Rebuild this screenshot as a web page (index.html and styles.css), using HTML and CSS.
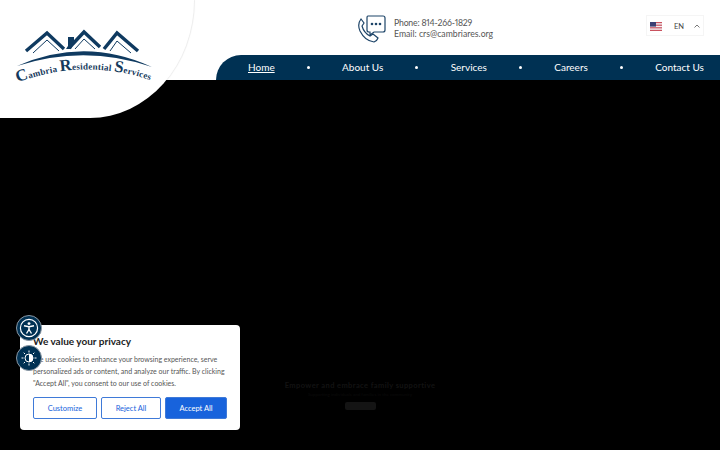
FILE: index.html
```html
<!DOCTYPE html>
<html>
<head>
    <title>Cambria Residential Services</title>
    <link rel="stylesheet" href="styles.css">
</head>
<body>
    <div class="logo-blob">
        <svg class="logo" width="194" height="118" viewBox="0 0 194 118">
            <g fill="none" stroke="#0f3a60" stroke-linejoin="miter">
                <path stroke-width="3.4" d="M26 51 L47 33 L64 49"/>
                <path stroke-width="1" d="M33 53 L47 40 L59 51"/>
                <path stroke-width="3.4" d="M69 48 L84 32 L100 47"/>
                <path stroke-width="1" d="M75 49 L84 39 L95 49"/>
                <path stroke-width="3.4" d="M104 49 L117 33 L138 51"/>
                <path stroke-width="1" d="M110 51 L117 41 L131 53"/>
            </g>
            <path fill="#0f3a60" d="M68 37 H74 V43 L71 49 H66 L68 46 Z"/>
            <path fill="#0f3a60" d="M17 66 Q85 36 152 67 Q85 44 17 66 Z"/>
            <path id="logoCurve" fill="none" d="M16 83 Q85 57 153 81"/>
            <text class="logo-text" fill="#14395c">
                <textPath href="#logoCurve" startOffset="1.5"><tspan class="logo-cap">C</tspan>ambria <tspan class="logo-cap">R</tspan>esidential <tspan class="logo-cap">S</tspan>ervices</textPath>
            </text>
        </svg>
    </div>

    <header class="site-header">
        <div class="top-row">
            <div class="contact">
                <svg class="contact-icon" width="29" height="28" viewBox="0 0 29 28" fill="none" stroke="#1d4468" stroke-width="1.2">
                    <path d="M11 1 H26 Q28 1 28 3 V15 Q28 17 26 17 H17 L13 20 V17 H12 Q10 17 10 15 V3 Q10 1 11 1 Z"/>
                    <circle cx="15" cy="9" r="1.3" fill="#1d4468" stroke="none"/>
                    <circle cx="19" cy="9" r="1.3" fill="#1d4468" stroke="none"/>
                    <circle cx="23" cy="9" r="1.3" fill="#1d4468" stroke="none"/>
                    <path d="M4 4 L7 8 L5 11 Q7 18 13 21 L16 19 L21 23 Q20 26 17 27 Q8 26 3 16 Q0 9 4 4 Z"/>
                </svg>
                <div class="contact-lines">
                    <div class="contact-phone">Phone: 814-266-1829</div>
                    <div>Email: crs@cambriares.org</div>
                </div>
            </div>
            <div class="lang">
                <svg class="flag" width="12" height="9" viewBox="0 0 12 9">
                    <rect width="12" height="9" fill="#f4f0f2"/>
                    <rect y="0" width="12" height="1.2" fill="#c9525f"/>
                    <rect y="2.6" width="12" height="1.2" fill="#c9525f"/>
                    <rect y="5.2" width="12" height="1.2" fill="#c9525f"/>
                    <rect y="7.8" width="12" height="1.2" fill="#c9525f"/>
                    <rect width="6" height="4.6" fill="#3b3f73"/>
                </svg>
                <span class="lang-code">EN</span>
                <svg class="chevron" width="6" height="4" viewBox="0 0 6 4" fill="none" stroke="#555" stroke-width="0.8"><path d="M0.5 3.5 L3 1 L5.5 3.5"/></svg>
            </div>
        </div>
        <nav class="main-nav">
            <a class="nav-link active" href="#">Home</a>
            <span class="nav-dot"></span>
            <a class="nav-link" href="#">About Us</a>
            <span class="nav-dot"></span>
            <a class="nav-link" href="#">Services</a>
            <span class="nav-dot"></span>
            <a class="nav-link" href="#">Careers</a>
            <span class="nav-dot"></span>
            <a class="nav-link" href="#">Contact Us</a>
        </nav>
    </header>

    <main class="hero">
        <div class="hero-title">Empower and embrace family supportive</div>
        <div class="hero-sub">Supporting individuals and families in the community</div>
        <div class="hero-btn"></div>
    </main>

    <div class="a11y-buttons">
        <div class="a11y-btn">
            <svg width="20" height="20" viewBox="0 0 20 20" fill="none" stroke="#fff">
                <circle cx="10" cy="10" r="8.6" stroke-width="1.2"/>
                <circle cx="10" cy="5.6" r="1.4" fill="#fff" stroke="none"/>
                <path stroke-width="1.4" d="M5 7.8 L10 8.8 L15 7.8 M10 8.8 V11.5 M10 11.5 L7.5 15.5 M10 11.5 L12.5 15.5"/>
            </svg>
        </div>
        <div class="a11y-btn">
            <svg width="20" height="20" viewBox="0 0 20 20" fill="none" stroke="#fff" stroke-width="1">
                <circle cx="10" cy="10" r="4"/>
                <path fill="#fff" stroke="none" d="M10 6 A4 4 0 0 1 10 14 Z"/>
                <path d="M10 2.5 V4.5 M10 15.5 V17.5 M2.5 10 H4.5 M15.5 10 H17.5 M4.7 4.7 L6 6 M14 14 L15.3 15.3 M4.7 15.3 L6 14 M14 6 L15.3 4.7"/>
            </svg>
        </div>
    </div>

    <div class="cookie-box">
        <div class="cookie-title">We value your privacy</div>
        <p class="cookie-text">We use cookies to enhance your browsing experience, serve personalized ads or content, and analyze our traffic. By clicking "Accept All", you consent to our use of cookies.</p>
        <div class="cookie-actions">
            <button class="cookie-btn customize">Customize</button>
            <button class="cookie-btn reject">Reject All</button>
            <button class="cookie-btn accept">Accept All</button>
        </div>
    </div>
</body>
</html>
```
FILE: styles.css
```css
html, body {
    margin: 0;
    height: 450px;
    overflow: hidden;
    background: #000;
    font-family: "Lato", sans-serif;
}
.logo-blob {
    position: absolute;
    top: 0;
    left: 0;
    width: 194px;
    height: 118px;
    background: #fff;
    border-bottom-right-radius: 104px 118px;
    box-shadow: 1px 0 1px rgba(0, 0, 0, 0.08);
    z-index: 2;
}
.logo {
    display: block;
}
.logo-text {
    font-family: "Liberation Serif", serif;
    font-size: 9px;
    font-weight: bold;
    letter-spacing: 0.25px;
}
.logo-cap {
    font-size: 16.5px;
}
.site-header {
    height: 80px;
    background: #fff;
    display: flex;
    flex-direction: column;
}
.top-row {
    height: 55px;
    display: flex;
    padding: 15px 16px 0 357px;
    box-sizing: border-box;
}
.contact {
    display: flex;
    gap: 8px;
    align-items: flex-start;
}
.contact-icon {
    display: block;
}
.contact-lines {
    font-size: 8.7px;
    line-height: 11px;
    color: #555;
    padding-top: 2px;
}
.contact-phone {
    font-variant-numeric: proportional-nums;
    letter-spacing: -0.2px;
}
.lang {
    margin-left: auto;
    width: 58px;
    height: 21px;
    box-sizing: border-box;
    border: 1px solid #f5f5f5;
    display: flex;
    align-items: center;
    padding: 1px 3px 0;
}
.flag {
    display: block;
}
.lang-code {
    font-size: 7.5px;
    color: #444;
    margin-left: 12px;
}
.chevron {
    display: block;
    margin-left: auto;
}
.main-nav {
    height: 25px;
    margin-left: 216px;
    background: #003153;
    border-top-left-radius: 25px;
    display: flex;
    align-items: center;
    justify-content: space-between;
    padding: 0 16px 1px 32px;
    box-sizing: border-box;
}
.nav-link {
    font-size: 10px;
    color: #fff;
    text-decoration: none;
}
.nav-link.active {
    text-decoration: underline;
}
.nav-dot {
    width: 3px;
    height: 3px;
    border-radius: 50%;
    background: #fff;
}
.hero {
    display: flex;
    flex-direction: column;
    align-items: center;
    padding-top: 301px;
}
.hero-title {
    font-size: 7.5px;
    font-weight: bold;
    letter-spacing: 0.4px;
    color: #131313;
}
.hero-sub {
    font-size: 4.5px;
    color: #0c0c0c;
    margin-top: 2px;
}
.hero-btn {
    width: 31px;
    height: 8px;
    margin-top: 5px;
    background: #141414;
    border-radius: 2px;
}
.a11y-buttons {
    position: absolute;
    top: 315px;
    left: 16px;
    display: flex;
    flex-direction: column;
    gap: 4px;
    z-index: 3;
}
.a11y-btn {
    width: 22px;
    height: 22px;
    padding: 1px;
    border: 1px solid #8a97a3;
    border-radius: 50%;
    background: #003153;
    display: flex;
    align-items: center;
    justify-content: center;
    box-sizing: content-box;
}
.cookie-box {
    position: absolute;
    top: 325px;
    left: 20px;
    width: 220px;
    height: 105px;
    box-sizing: border-box;
    padding: 10px 13px;
    background: #fff;
    border-radius: 4px;
}
.cookie-title {
    font-size: 10px;
    font-weight: bold;
    line-height: 12px;
    color: #212121;
}
.cookie-text {
    margin: 6px 0 0;
    font-size: 7px;
    line-height: 12px;
    color: #555;
}
.cookie-actions {
    display: flex;
    gap: 4px;
    margin-top: 8px;
}
.cookie-btn {
    height: 22px;
    padding: 0;
    font-family: inherit;
    font-size: 7.5px;
    border: 1.5px solid #3f7ad8;
    border-radius: 2px;
    background: #fff;
    color: #1863dc;
}
.customize {
    width: 64px;
}
.reject {
    width: 60px;
}
.accept {
    width: 62px;
    background: #1863dc;
    color: #fff;
}
```
